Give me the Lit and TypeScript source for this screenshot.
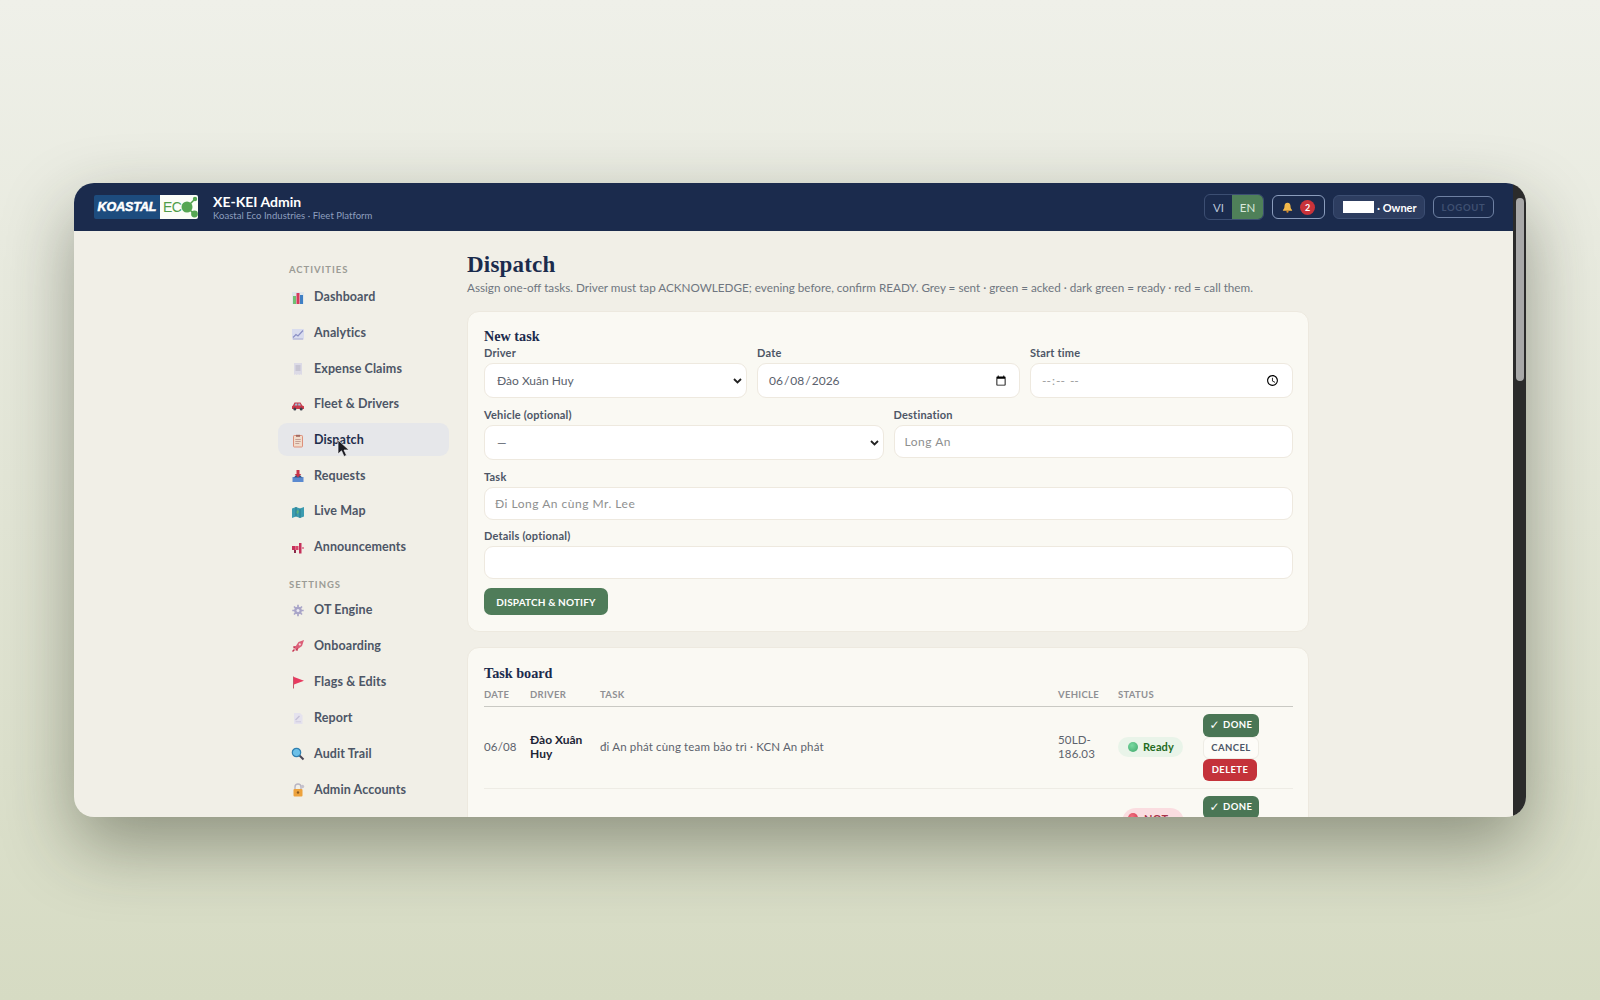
import { LitElement, html, css, svg } from "lit";
import { customElement } from "lit/decorators.js";

const icons: Record<string, unknown> = {
  dash: svg`<rect x="1" y="1" width="12" height="12" fill="#dfe6ea"/><rect x="2" y="5" width="3" height="8" fill="#6fbf73"/><rect x="5.5" y="2" width="3" height="11" fill="#d8385a"/><rect x="9" y="4" width="3" height="9" fill="#3f7fc4"/>`,
  chart: svg`<rect x="1" y="2" width="12" height="10.5" fill="#d9dcee"/><path d="M2 10.5 5 7.5 7 9 12 3.5" fill="none" stroke="#8a8fc4" stroke-width="1.2"/><path d="M2 12h10" stroke="#a9acd0"/>`,
  receipt: svg`<path d="M3 1h8v12l-1.3-.8-1.3.8-1.4-.8-1.4.8-1.3-.8L3 13z" fill="#dcdae6"/><path d="M4.500 4h5M4.500 6h5M4.500 8h5" stroke="#a8a6b8" stroke-width=".8"/>`,
  car: svg`<path d="M3.500 4.500h6l1.800 3 1.700.7V11H1V8.200l1-.7z" fill="#c9394a"/><path d="M4.500 5.500h1.800v2H3.500zM7.200 5.500h1.700l1 2H7.200z" fill="#9cc3dd"/><circle cx="3.800" cy="11" r="1.500" fill="#3b3f4c"/><circle cx="10.200" cy="11" r="1.500" fill="#3b3f4c"/>`,
  clip: svg`<rect x="2.500" y="1.500" width="9" height="11.500" rx=".8" fill="#f1dccb" stroke="#dd8f7a"/><rect x="5" y=".8" width="4" height="2" fill="#a2685e"/><path d="M4.300 5.500h5.400M4.300 7.500h5.400M4.300 9.500h4" stroke="#b98f86" stroke-width=".8"/>`,
  inbox: svg`<path d="M1.500 8h11v5h-11z" fill="#5b8ad0"/><path d="M3 8.500 5 6h4l2 2.500z" fill="#33507e"/><path d="M5.500 1h3v4h1.800L7 8.500 3.700 5h1.800z" fill="#c8344a"/>`,
  map: svg`<path d="M1 3.500 5 2l4 1.500L13 2v9.500L9 13l-4-1.500L1 13z" fill="#3b9bb0"/><path d="M5 2v9.500M9 3.500V13" stroke="#2a7385" stroke-width=".8"/><path d="M6 5l2 1-1 3-1.500-1z" fill="#5fb37e"/>`,
  mega: svg`<rect x="1" y="5" width="3.500" height="4" fill="#c5305a"/><path d="M4.500 5h3v4h-3z" fill="#d9476b"/><rect x="8" y="2" width="2.500" height="10.500" fill="#c5305a"/><rect x="10.500" y="6" width="2.500" height="2" fill="#e08aa0"/><rect x="3" y="9" width="2" height="3" fill="#8c2a4a"/>`,
  gear: svg`<circle cx="7" cy="7.500" r="3.800" fill="#a9a5c8"/><path d="M7 1.800v11.400M1.300 7.500h11.400M3 3.500l8 8M11 3.500l-8 8" stroke="#a9a5c8" stroke-width="1.700"/><circle cx="7" cy="7.500" r="1.500" fill="#ece9f2"/>`,
  rocket: svg`<path d="M13 1 7.500 3 3.500 9l2 2L11 7z" fill="#dc5f78"/><path d="M2 7.500l3-.5-2 3zM6.500 12l.5-3-3 2z" fill="#c5304f"/><circle cx="8.800" cy="5.400" r="1.100" fill="#f2d7dc"/><path d="M1.500 12.500l2-2" stroke="#c5304f" stroke-width="1.500"/>`,
  flag: svg`<path d="M2.500 1.500v12" stroke="#c7576a" stroke-width="1"/><path d="M3 2l10 3.800L3 9.500z" fill="#e8395f"/>`,
  memo: svg`<path d="M3 2h6l2.500 2.500V13H3z" fill="#e5e2ee"/><path d="M4.500 9l4-4" stroke="#c4bfd6" stroke-width="1.300"/><path d="M4.500 10.800h5.500" stroke="#cfcbdf"/>`,
  search: svg`<path d="M8.500 8.500l4 4" stroke="#4a4555" stroke-width="2"/><circle cx="5.500" cy="5.500" r="4.200" fill="#6cc0e8" stroke="#2f7fb0" stroke-width="1.200"/>`,
  lock: svg`<path d="M4 6V4a3 3 0 0 1 6 0v2" fill="none" stroke="#b9b5c2" stroke-width="1.400"/><rect x="2.500" y="6" width="9" height="7.500" rx="1" fill="#eda23d"/><circle cx="7" cy="9.500" r="1.200" fill="#8a5a20"/><circle cx="11.500" cy="3.500" r="1.700" fill="#c5c1cc"/>`,
};

const activities = [
  ["dash", "Dashboard"], ["chart", "Analytics"], ["receipt", "Expense Claims"], ["car", "Fleet & Drivers"],
  ["clip", "Dispatch"], ["inbox", "Requests"], ["map", "Live Map"], ["mega", "Announcements"],
];
const settings = [
  ["gear", "OT Engine"], ["rocket", "Onboarding"], ["flag", "Flags & Edits"],
  ["memo", "Report"], ["search", "Audit Trail"], ["lock", "Admin Accounts"],
];

@customElement("app-root")
export class AppRoot extends LitElement {
  static styles = css`
    :host {
      display: flex;
      align-items: center;
      justify-content: center;
      height: 100vh;
      background: linear-gradient(180deg, #eff0e9 0%, #d6dbc3 100%);
      font-family: "Lato", "Noto Sans", sans-serif;
      overflow: hidden;
    }
    * { box-sizing: border-box; }
    .window {
      position: relative;
      width: 1452px;
      height: 634px;
      border-radius: 20px;
      overflow: hidden;
      display: flex;
      background: #f1efe7;
      box-shadow: 0 28px 70px rgba(35, 40, 25, 0.42);
    }
    .page { flex: 1; min-width: 0; display: flex; flex-direction: column; }
    .scrollbar { width: 13px; background: #2b2b2b; padding: 15px 2px 0 3px; }
    .thumb { height: 183px; background: #a8a8a8; border-radius: 4px; }

    .topbar {
      height: 48px;
      flex: none;
      background: #1b2b4d;
      display: flex;
      align-items: center;
      padding: 0 19px 0 20px;
    }
    .logo { display: flex; height: 24px; width: 104px; border-radius: 2px; overflow: hidden; flex: none; }
    .logo-a {
      width: 66px;
      flex: none;
      background: #1d4c7e;
      color: #fff;
      font: italic 700 12.500px/24px "Liberation Sans", sans-serif;
      -webkit-text-stroke: 0.5px #fff;
      text-align: center;
      letter-spacing: -0.1px;
    }
    .logo-b {
      flex: 1;
      min-width: 0;
      background: #fbfdf8;
      display: flex;
      align-items: center;
      padding-left: 3px;
      color: #4f9d4a;
      font: 400 14px/24px "Liberation Sans", sans-serif;
      letter-spacing: -0.6px;
    }
    .logo-b svg { width: 17px; height: 22px; flex: none; }
    .brand { margin-left: 15px; display: flex; flex-direction: column; }
    .brand b { color: #fff; font-size: 14px; line-height: 17px; font-weight: 700; }
    .brand span { color: #8e9fbf; font-size: 9.500px; line-height: 12px; letter-spacing: 0.04px; }
    .spacer { flex: 1; }
    .lang {
      display: flex;
      height: 26px;
      width: 60px;
      border: 1px solid #3c4e72;
      border-radius: 6px;
      overflow: hidden;
      font-size: 11.500px;
      color: #b9c4d8;
    }
    .lang span { display: flex; align-items: center; justify-content: center; }
    .lang .vi { width: 27px; }
    .lang .en { flex: 1; background: #4f8059; color: #d9e8dc; }
    .bell {
      margin-left: 8px;
      width: 53px;
      height: 24px;
      border: 1px solid #8a9cbc;
      border-radius: 6px;
      display: flex;
      align-items: center;
      justify-content: center;
      gap: 7px;
    }
    .bell svg { width: 11px; height: 11px; }
    .count {
      width: 15px;
      height: 15px;
      border-radius: 50%;
      background: #c9333a;
      color: #fff;
      font-size: 9px;
      font-weight: 700;
      display: flex;
      align-items: center;
      justify-content: center;
    }
    .owner {
      margin-left: 8px;
      width: 92px;
      height: 24px;
      border-radius: 6px;
      border: 1px solid #3c4e72;
      background: #2d3d60;
      color: #fff;
      font-size: 11px;
      font-weight: 700;
      display: flex;
      align-items: center;
      padding-left: 9px;
      gap: 3px;
    }
    .redact { width: 31px; height: 12px; background: #fff; flex: none; }
    .logout {
      margin-left: 8px;
      width: 61px;
      height: 22px;
      border: 1px solid #6e80a2;
      border-radius: 6px;
      color: #3f5072;
      font-size: 9.500px;
      font-weight: 700;
      letter-spacing: 0.7px;
      display: flex;
      align-items: center;
      justify-content: center;
    }

    .body {
      flex: 1;
      min-height: 0;
      overflow: hidden;
      display: flex;
      justify-content: center;
      gap: 18px;
    }
    .side { width: 171px; flex: none; padding-top: 33px; display: flex; flex-direction: column; }
    .sec {
      height: 12px;
      line-height: 12px;
      margin: 0 0 4px 11px;
      font-size: 9.500px;
      font-weight: 700;
      letter-spacing: 0.95px;
      color: #9b9b95;
    }
    .sec.second { margin-top: 15px; margin-bottom: 2px; }
    .nav { display: flex; flex-direction: column; gap: 2px; }
    .nav.lower { gap: 2.300px; }
    .item {
      height: 33.700px;
      flex: none;
      display: flex;
      align-items: center;
      gap: 9px;
      padding-left: 13px;
      border-radius: 9px;
      color: #4d5666;
      font-size: 12.500px;
      font-weight: 700;
      letter-spacing: 0.1px;
    }
    .item svg { width: 14px; height: 14px; flex: none; margin-top: 2px; }
    .item.on { background: #e6e7ea; color: #1f2d4a; }

    .main { width: 842px; flex: none; padding-top: 20px; }
    h1 {
      margin: 0;
      font: 700 23px/28px "Liberation Serif", serif;
      color: #1b2b4d;
      letter-spacing: 0.2px;
    }
    .sub { margin: 1px 0 17px; font-size: 11.700px; line-height: 14px; color: #6f7680; white-space: nowrap; }
    .card {
      background: #faf9f3;
      border: 1px solid #ede9df;
      border-radius: 12px;
      padding: 15px 15px 16px 16px;
      margin-bottom: 15px;
    }
    .card.board { padding-top: 16px; }
    h2 { margin: 0; font: 700 14.200px/19px "Liberation Serif", serif; color: #1b2b4d; }
    .form { display: flex; flex-direction: column; gap: 9px; }
    .row { display: grid; gap: 10px; }
    .r3 { grid-template-columns: repeat(3, 1fr); margin-bottom: 1px; }
    .r2 { grid-template-columns: repeat(2, 1fr); margin-bottom: 1px; }
    label { display: block; font-size: 11px; line-height: 14px; font-weight: 700; letter-spacing: 0.2px; color: #4d5666; margin-bottom: 3px; }
    input, select {
      display: block;
      width: 100%;
      height: 33px;
      border: 1px solid #eee9df;
      border-radius: 9px;
      background-color: #fff;
      padding: 0 10px;
      font: 400 12px "Lato", "Noto Sans", sans-serif;
      color: #5a616c;
      outline: none;
    }
    input.text { letter-spacing: 0.5px; }
    input::placeholder { color: #8e8f8f; }
    select {
      appearance: none;
      height: 35px;
      padding-left: 12px;
      background-repeat: no-repeat;
      background-position: right 4px center;
      background-size: 9px 6px;
      background-image: url("data:image/svg+xml,%3Csvg xmlns='http://www.w3.org/2000/svg' viewBox='0 0 9 6'%3E%3Cpath d='M1 1l3.500 3.500L8 1' fill='none' stroke='%23222' stroke-width='1.800'/%3E%3C/svg%3E");
    }
    .tall { height: 35px; }
    .time { color: #9c9d9d; }
    .btn {
      align-self: flex-start;
      height: 27px;
      width: 124px;
      border-radius: 7px;
      background: #4f7c59;
      color: #fff;
      font-size: 10px;
      font-weight: 700;
      letter-spacing: 0.15px;
      display: flex;
      align-items: center;
      justify-content: center;
    }
    table { width: 100%; border-collapse: collapse; table-layout: fixed; margin-top: 5px; }
    .c1 { width: 46px; }
    .c2 { width: 70px; }
    .c4 { width: 60px; }
    .c5 { width: 85px; }
    .c6 { width: 90px; }
    th {
      height: 18px;
      padding: 1px 0 0;
      text-align: left;
      font-size: 9.500px;
      font-weight: 700;
      letter-spacing: 0.3px;
      color: #8f9093;
      border-bottom: 1px solid #c9c9c3;
      vertical-align: top;
    }
    td { padding: 7px 0; font-size: 11.500px; line-height: 14px; letter-spacing: 0.15px; color: #5d636d; border-bottom: 1px solid #eeece5; vertical-align: middle; }
    td b { color: #1c2536; font-weight: 700; font-size: 12px; letter-spacing: 0; display: block; width: 56px; }
    .vehicle { padding-right: 14px; }
    .pill {
      display: inline-flex;
      align-items: center;
      gap: 5px;
      width: 65px;
      height: 20px;
      padding-left: 10px;
      border-radius: 10px;
      background: #e9f4e9;
      color: #236b22;
      font-size: 11px;
      font-weight: 700;
    }
    .dot { width: 10px; height: 10px; border-radius: 50%; background: radial-gradient(circle at 40% 35%, #78d9a0, #3fa66a); flex: none; }
    td.up { vertical-align: top; padding-top: 19px; }
    .pill.bad {
      background: #fadde0;
      color: #a8344a;
      width: 62px;
      height: 34px;
      margin-left: 4px;
      padding: 4px 0 0 6px;
      gap: 6px;
      line-height: 14px;
      align-items: flex-start;
      border-radius: 14px;
    }
    .pill.bad .dot { background: radial-gradient(circle at 40% 35%, #f0707f, #cf3048); margin-top: 1px; }
    .acts { display: flex; flex-direction: column; align-items: flex-start; }
    .a {
      height: 22px;
      border-radius: 6px;
      font-size: 9.500px;
      font-weight: 700;
      letter-spacing: 0.4px;
      display: flex;
      align-items: center;
      justify-content: center;
      gap: 3px;
    }
    .tick { font: 700 12px/1 "DejaVu Sans", sans-serif; }
    .done { width: 56px; background: #4a7655; color: #fff; height: 23px; }
    .cancel { width: 56px; background: #fdfcf8; color: #4d5666; border: 1px solid #eeece5; }
    .del { width: 54px; background: #c4323a; color: #fff; }

    .cursor { position: absolute; left: 263px; top: 256px; width: 13px; height: 19px; }
  `;

  private navItem(i: string[]) {
    return html`<div class="item ${i[1] === "Dispatch" ? "on" : ""}">
      <svg viewBox="0 0 14 14">${icons[i[0]]}</svg><span>${i[1]}</span>
    </div>`;
  }

  private actions() {
    return html`<div class="acts">
      <div class="a done"><span class="tick">✓</span>DONE</div>
      <div class="a cancel">CANCEL</div>
      <div class="a del">DELETE</div>
    </div>`;
  }

  render() {
    return html`
      <div class="window">
        <div class="page">
          <header class="topbar">
            <div class="logo">
              <div class="logo-a">KOASTAL</div>
              <div class="logo-b">EC<svg viewBox="0 0 17 22">
                <path d="M6 11 14 3M6 11l8 8" stroke="#4f9d4a" stroke-width="1.500"/>
                <circle cx="6" cy="11" r="5.500" fill="#55a653"/>
                <circle cx="14" cy="3" r="2.200" fill="#55a653"/>
                <circle cx="13.500" cy="18" r="3.400" fill="#55a653"/>
              </svg></div>
            </div>
            <div class="brand"><b>XE-KEI Admin</b><span>Koastal Eco Industries · Fleet Platform</span></div>
            <div class="spacer"></div>
            <div class="lang"><span class="vi">VI</span><span class="en">EN</span></div>
            <div class="bell">
              <svg viewBox="0 0 12 12"><path d="M6 .8c2.300 0 3.300 1.700 3.300 3.800 0 2 .7 3 1.700 4v1H1v-1c1-1 1.700-2 1.700-4C2.700 2.500 3.700.8 6 .8z" fill="#f2b84a"/><circle cx="6" cy="10.500" r="1.200" fill="#d88a2a"/></svg>
              <span class="count">2</span>
            </div>
            <div class="owner"><span class="redact"></span><span>· Owner</span></div>
            <div class="logout">LOGOUT</div>
          </header>
          <div class="body">
            <aside class="side">
              <div class="sec">ACTIVITIES</div>
              <nav class="nav">${activities.map((i) => this.navItem(i))}</nav>
              <div class="sec second">SETTINGS</div>
              <nav class="nav lower">${settings.map((i) => this.navItem(i))}</nav>
            </aside>
            <main class="main">
              <h1>Dispatch</h1>
              <p class="sub">Assign one-off tasks. Driver must tap ACKNOWLEDGE; evening before, confirm READY. Grey = sent · green = acked · dark green = ready · red = call them.</p>
              <section class="card">
                <h2>New task</h2>
                <div class="form">
                  <div class="row r3">
                    <div><label>Driver</label><select><option>Đào Xuân Huy</option></select></div>
                    <div><label>Date</label><input class="tall" type="date" value="2026-06-08" /></div>
                    <div><label>Start time</label><input class="tall time" type="time" /></div>
                  </div>
                  <div class="row r2">
                    <div><label>Vehicle (optional)</label><select><option>—</option></select></div>
                    <div><label>Destination</label><input class="text" placeholder="Long An" /></div>
                  </div>
                  <div><label>Task</label><input class="text" placeholder="Đi Long An cùng Mr. Lee" /></div>
                  <div><label>Details (optional)</label><input class="text" /></div>
                  <div class="btn">DISPATCH &amp; NOTIFY</div>
                </div>
              </section>
              <section class="card board">
                <h2>Task board</h2>
                <table>
                  <colgroup><col class="c1" /><col class="c2" /><col /><col class="c4" /><col class="c5" /><col class="c6" /></colgroup>
                  <thead><tr><th>DATE</th><th>DRIVER</th><th>TASK</th><th>VEHICLE</th><th>STATUS</th><th></th></tr></thead>
                  <tbody>
                    <tr>
                      <td>06/08</td>
                      <td><b>Đào Xuân Huy</b></td>
                      <td>đi An phát cùng team bảo trì · KCN An phát</td>
                      <td class="vehicle">50LD-186.03</td>
                      <td><span class="pill"><i class="dot"></i>Ready</span></td>
                      <td>${this.actions()}</td>
                    </tr>
                    <tr>
                      <td></td>
                      <td></td>
                      <td></td>
                      <td></td>
                      <td class="up"><span class="pill bad"><i class="dot"></i><span>NOT READY</span></span></td>
                      <td>${this.actions()}</td>
                    </tr>
                  </tbody>
                </table>
              </section>
            </main>
          </div>
        </div>
        <div class="scrollbar"><div class="thumb"></div></div>
        <svg class="cursor" viewBox="0 0 13 19"><path d="M1 1v14l3.500-3.200L7 17.500l2.500-1.200L7 11h5z" fill="#1c1c22" stroke="#f5f5f5" stroke-width=".7"/></svg>
      </div>
    `;
  }
}
